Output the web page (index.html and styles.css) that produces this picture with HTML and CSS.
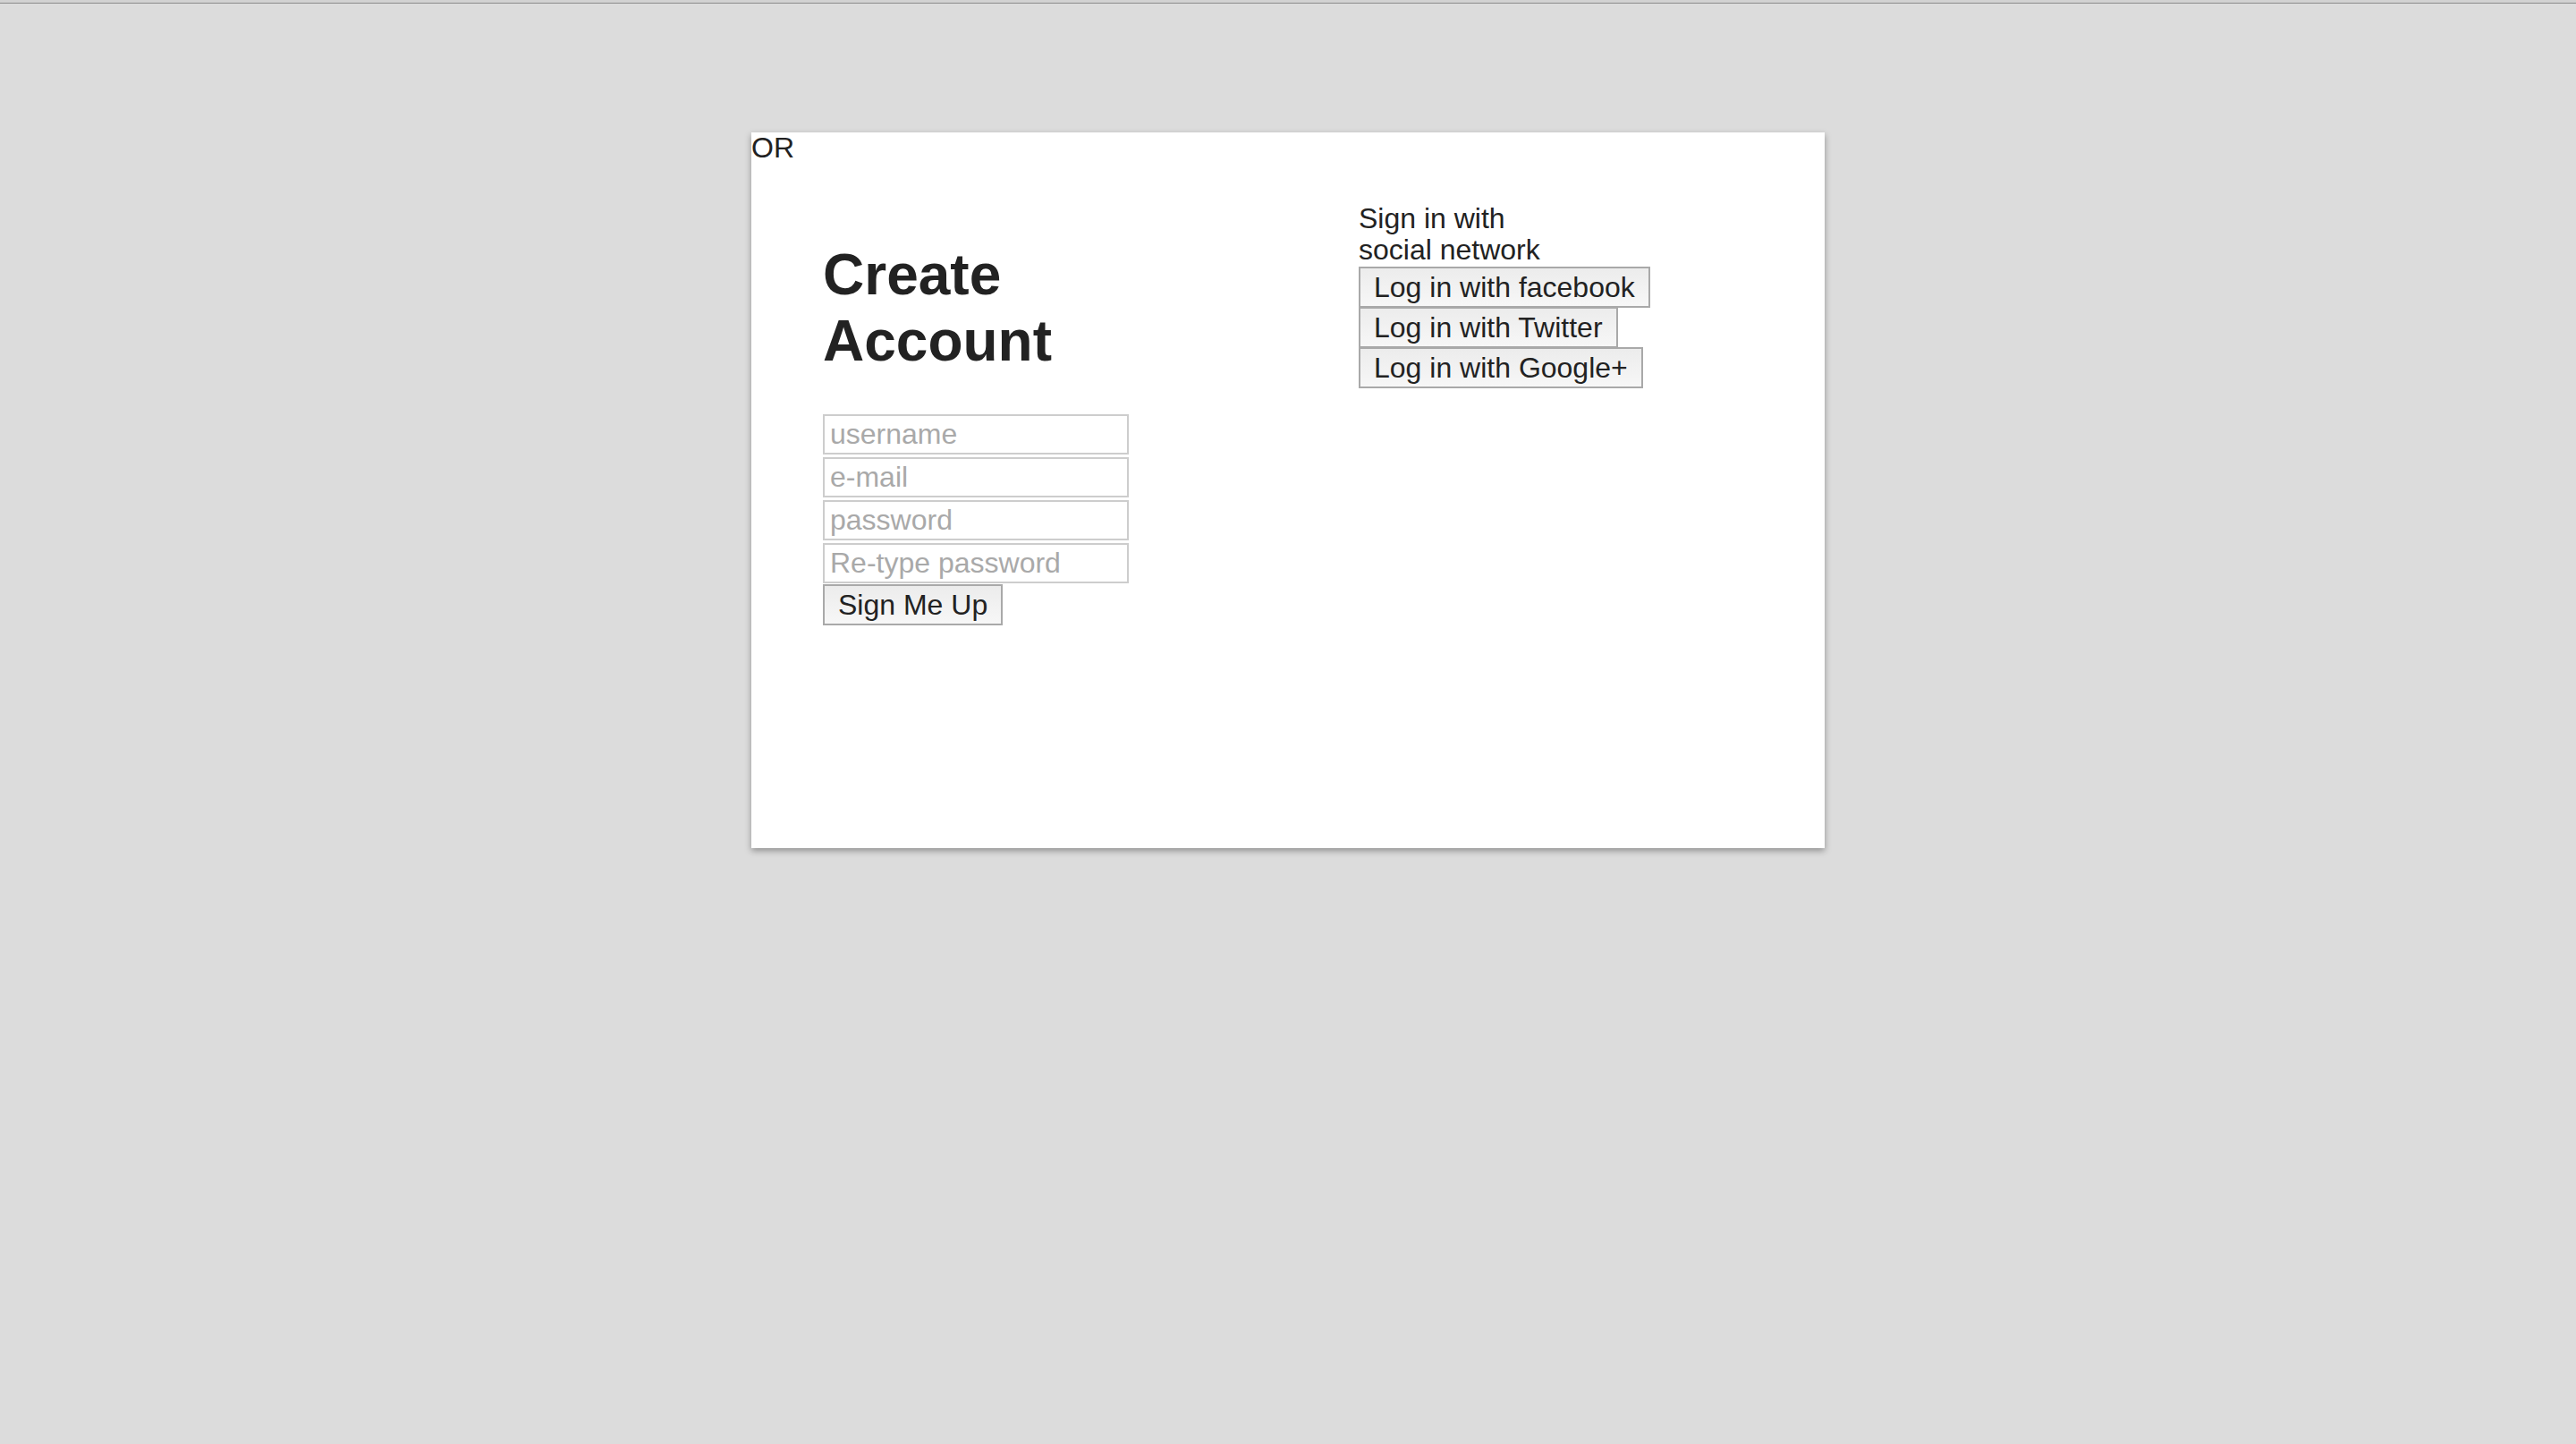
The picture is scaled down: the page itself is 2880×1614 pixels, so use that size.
FILE: index.html
```html
<!DOCTYPE html>
<html lang="en">
<head>
<meta charset="utf-8">
<title>Create Account</title>
<link rel="stylesheet" href="styles.css">
</head>
<body>
<div class="chrome"></div>
<div class="card">
  <span class="or">OR</span>
  <div class="left">
    <h1 class="title">Create Account</h1>
    <form class="form">
      <input class="field" type="text" placeholder="username">
      <input class="field" type="email" placeholder="e-mail">
      <input class="field" type="password" placeholder="password">
      <input class="field" type="password" placeholder="Re-type password">
      <button class="btn" type="button">Sign Me Up</button>
    </form>
  </div>
  <div class="right">
    <p class="social-title">Sign in with social network</p>
    <div class="social">
      <button class="btn" type="button">Log in with facebook</button>
      <button class="btn" type="button">Log in with Twitter</button>
      <button class="btn" type="button">Log in with Google+</button>
    </div>
  </div>
</div>
</body>
</html>
```

FILE: styles.css
```css
html, body {
  margin: 0;
  padding: 0;
}
body {
  background: #dcdcdc;
  font-family: "Liberation Sans", Arial, sans-serif;
  font-size: 32px;
  color: #222;
  min-height: 1614px;
}
.chrome {
  height: 3px;
  background: #d2d2d2;
  border-bottom: 1px solid #8c8c8c;
}
.card {
  position: relative;
  width: 1200px;
  height: 800px;
  margin: 144px auto 0;
  background: #fff;
  box-shadow: 0 3px 7px rgba(0, 0, 0, 0.35);
  display: flex;
  align-items: flex-start;
  padding-left: 80px;
  box-sizing: border-box;
  gap: 257px;
}
.or {
  position: absolute;
  left: 0;
  top: 0;
  line-height: 1;
  margin-top: 1px;
  color: #222;
}
.left {
  width: 342px;
  padding-top: 123px;
}
.title {
  margin: 0;
  font-size: 64px;
  font-weight: bold;
  line-height: 1.15;
  color: #222;
}
.form {
  margin-top: 45px;
  display: flex;
  flex-direction: column;
  align-items: flex-start;
  gap: 3px;
}
.field {
  box-sizing: border-box;
  width: 342px;
  height: 45px;
  margin: 0;
  padding: 0 6px;
  border: 2px solid #cdcdcd;
  background: #fff;
  font-family: inherit;
  font-size: 32px;
  color: #222;
  outline: none;
}
.field::placeholder {
  color: #a9a9a9;
}
.btn {
  box-sizing: border-box;
  height: 46px;
  margin: 0;
  padding: 0 15px;
  border: 2px solid #a9a9a9;
  border-radius: 0;
  background: linear-gradient(#ececec, #f7f7f7);
  font-family: inherit;
  font-size: 32px;
  color: #222;
  white-space: nowrap;
  line-height: 1;
}
.form .btn {
  margin-top: -2px;
}
.right {
  width: 230px;
  padding-top: 79px;
}
.social-title {
  margin: 0;
  line-height: 1.1;
}
.social {
  margin-top: 1px;
  display: flex;
  flex-direction: column;
  align-items: flex-start;
}
.social .btn + .btn {
  margin-top: -1px;
}
```
